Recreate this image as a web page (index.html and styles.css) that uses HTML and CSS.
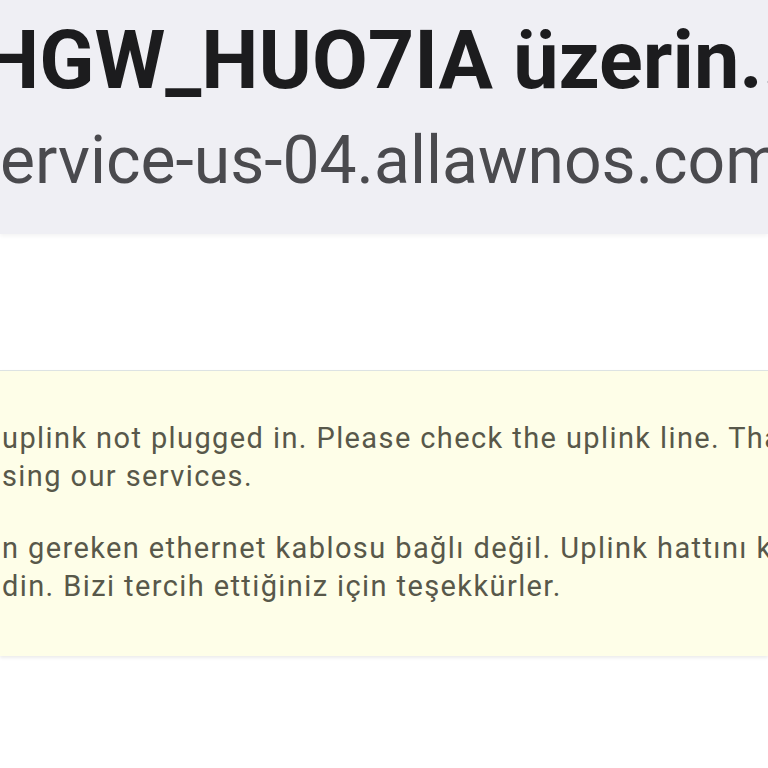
FILE: index.html
```html
<!DOCTYPE html>
<html lang="tr">
<head>
<meta charset="utf-8">
<title>HGW_HUO7IA</title>
<link rel="stylesheet" href="styles.css">
</head>
<body>
<header class="top">
  <h1 class="title">HGW_HUO7IA üzerin...</h1>
  <p class="host">ervice-us-04.allawnos.com</p>
</header>
<main class="page">
  <section class="notice">
    <p class="para">uplink not plugged in. Please check the uplink line. Thank you for<br>sing our services.</p>
    <p class="para">n gereken ethernet kablosu bağlı değil. Uplink hattını kontrol<br>din. Bizi tercih ettiğiniz için teşekkürler.</p>
  </section>
</main>
</body>
</html>
```
FILE: styles.css
```css
html, body {
  margin: 0;
  padding: 0;
  background: #ffffff;
  overflow: hidden;
  width: 768px;
  height: 768px;
}
body {
  font-family: Roboto, "Noto Sans", "DejaVu Sans", sans-serif;
}
.top {
  background: #efeff4;
  height: 234px;
  box-sizing: border-box;
  padding-top: 13px;
  box-shadow: 0 2px 4px rgba(0, 0, 0, 0.05);
  overflow: hidden;
}
.title {
  margin: 0 0 0 -18px;
  font-size: 81px;
  line-height: 96px;
  font-weight: 700;
  color: #1c1c1e;
  white-space: nowrap;
}
.host {
  margin: 12px 0 0 0;
  font-size: 66px;
  line-height: 80px;
  font-weight: 400;
  color: #4a4a4e;
  white-space: nowrap;
}
.page {
  padding-top: 136px;
}
.notice {
  background: #fefee8;
  border-top: 1px solid #dde3e3;
  box-shadow: 0 2px 3px rgba(0, 0, 0, 0.08);
  padding: 48px 0 48px 2px;
  height: 286px;
  box-sizing: border-box;
  overflow: hidden;
}
.para {
  margin: 0;
  font-size: 29px;
  line-height: 38px;
  letter-spacing: 1.4px;
  color: #58584a;
  white-space: nowrap;
}
.para + .para {
  margin-top: 34px;
}
```
